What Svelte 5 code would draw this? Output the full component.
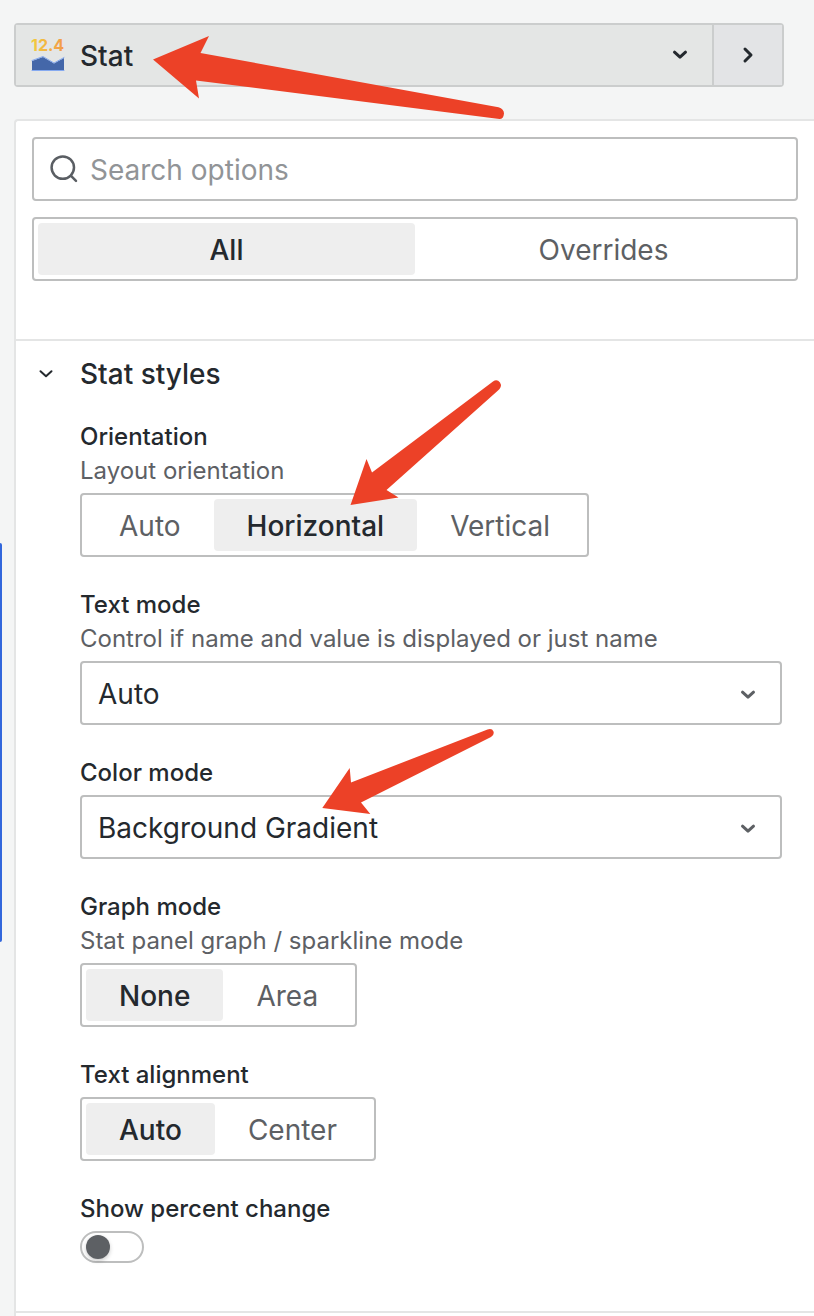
<script>
  let search = $state('');
  let scope = $state('All');
  let orientation = $state('Horizontal');
  let textMode = $state('Auto');
  let colorMode = $state('Background Gradient');
  let graphMode = $state('None');
  let alignment = $state('Auto');
  let percentChange = $state(false);
  let open = $state(true);
</script>

{#snippet chevron()}
  <svg class="chevron" viewBox="0 0 16 10" width="16" height="10" aria-hidden="true">
    <path d="M2.500 2.200 8 7.200l5.500-5" />
  </svg>
{/snippet}

{#snippet segments(name, options, value, pick)}
  <div class="segments" class:full={name === 'scope'} role="radiogroup" aria-label={name}>
    {#each options as option}
      <label class="segment">
        <input type="radio" {name} value={option} checked={value === option} onchange={() => pick(option)} />
        <span>{option}</span>
      </label>
    {/each}
  </div>
{/snippet}

<div class="page">
  <header class="viz">
    <button class="viz-current" type="button">
      <svg class="viz-icon" viewBox="-1 -4 36 42" width="36" height="42" aria-hidden="true">
        <defs>
          <linearGradient id="digits" x1="0" x2="1">
            <stop offset="0" stop-color="#f2cc3c" />
            <stop offset="1" stop-color="#f29a4b" />
          </linearGradient>
        </defs>
        <text x="0" y="13" fill="url(#digits)">12.4</text>
        <path d="M1 23 12 19l11 6.500L33 20v13H1z" fill="#4467a9" />
        <path d="M1 22.500 12 18.500l11 6.500L33 19.500M1 32.500h32" fill="none" stroke="#86aaf0" stroke-width="1" />
      </svg>
      <span>Stat</span>
      {@render chevron()}
    </button>
    <button class="viz-next" type="button" aria-label="Close">
      <svg viewBox="0 0 12 18" width="12" height="18" aria-hidden="true">
        <path d="M3 3l6 6-6 6" />
      </svg>
    </button>
  </header>

  <main class="panel">
    <div class="filters">
      <label class="search">
        <svg viewBox="0 0 28 28" width="28" height="28" aria-hidden="true">
          <circle cx="12.800" cy="12.600" r="11.200" />
          <path d="M20.800 20.600 26 25.800" />
        </svg>
        <input type="text" aria-label="Search options" placeholder="Search options" bind:value={search} />
      </label>
      {@render segments('scope', ['All', 'Overrides'], scope, (v) => (scope = v))}
    </div>

    <section>
      <h2>
        <button type="button" aria-expanded={open} onclick={() => (open = !open)}>
          {@render chevron()}
          <span>Stat styles</span>
        </button>
      </h2>
      {#if open}
        <div class="fields">
          <div class="field">
            <div class="title">Orientation</div>
            <p>Layout orientation</p>
            {@render segments('orientation', ['Auto', 'Horizontal', 'Vertical'], orientation, (v) => (orientation = v))}
          </div>
          <div class="field">
            <label class="title" for="text-mode">Text mode</label>
            <p>Control if name and value is displayed or just name</p>
            <div class="select">
              <select id="text-mode" bind:value={textMode}>
                <option>Auto</option>
              </select>
              {@render chevron()}
            </div>
          </div>
          <div class="field">
            <label class="title" for="color-mode">Color mode</label>
            <div class="select">
              <select id="color-mode" bind:value={colorMode}>
                <option>Background Gradient</option>
              </select>
              {@render chevron()}
            </div>
          </div>
          <div class="field">
            <div class="title">Graph mode</div>
            <p>Stat panel graph / sparkline mode</p>
            {@render segments('graph', ['None', 'Area'], graphMode, (v) => (graphMode = v))}
          </div>
          <div class="field">
            <div class="title">Text alignment</div>
            {@render segments('alignment', ['Auto', 'Center'], alignment, (v) => (alignment = v))}
          </div>
          <div class="field">
            <label class="title" for="percent">Show percent change</label>
            <input id="percent" class="switch" type="checkbox" role="switch" bind:checked={percentChange} />
          </div>
        </div>
      {/if}
    </section>
    <section></section>
  </main>

  <div class="selection"></div>
  <svg class="arrows" viewBox="0 0 520 830" width="520" height="830" aria-hidden="true">
    <path d="M153 59.500 209 36l-8.500 17L498.500 107.300Q504 109 504 113.500 503.500 119 499.500 119L196 80.500l3 18z" />
    <path d="M350.500 505 366.500 459l5.500 13.500L493 381.500Q497 378.500 500 382.500 502.500 386.500 498 390.500L386.500 490l12 7.500z" />
    <path d="M322.300 808 349.700 768l1.300 14.500L487.500 729.500Q492 728 493.500 731.500 494.500 735 491 737L361 802.500l9.300 11.500z" />
  </svg>
</div>

<style>
  :global(body) {
    background: #f4f5f5;
  }
  .page {
    position: relative;
    overflow: hidden;
    box-sizing: border-box;
    min-height: 100vh;
    padding: 23px 0 0 14px;
    display: flex;
    flex-direction: column;
    gap: 32px;
    font: 400 28px/32px Inter, "Liberation Sans", sans-serif;
    color: #24292e;
  }
  .page *,
  .page *::before {
    box-sizing: border-box;
  }
  button,
  input,
  select {
    font: inherit;
    color: inherit;
    margin: 0;
  }
  svg {
    flex: none;
    fill: none;
    stroke: currentColor;
    stroke-width: 3;
    stroke-linecap: round;
    stroke-linejoin: round;
  }
  .viz {
    display: flex;
    height: 64px;
    margin-right: 30px;
    border: 2px solid #cbcdcd;
    border-radius: 4px;
  }
  .viz button {
    border: 0;
    background: #e4e6e5;
    font-weight: 500;
  }
  .viz .viz-current {
    flex: 1;
    display: flex;
    align-items: center;
    gap: 14px;
    padding: 0 24px 0 14px;
    text-align: left;
  }
  .viz-current span {
    flex: 1;
    padding-top: 2px;
  }
  .viz-icon {
    stroke: none;
  }
  .viz-icon text {
    font-size: 16px;
    font-weight: 700;
  }
  .viz .viz-next {
    width: 70px;
    display: grid;
    place-items: center;
    padding: 0;
    border-left: 2px solid #cbcdcd;
    background: #e3e4e6;
  }
  .panel {
    flex: 1;
    border: 2px solid #e4e5e5;
    border-width: 2px 0 0 2px;
    border-radius: 4px 0 0 0;
    background: #fff;
  }
  .filters {
    display: flex;
    flex-direction: column;
    gap: 16px;
    padding: 16px 16px 58px;
  }
  .search {
    display: flex;
    align-items: center;
    gap: 12px;
    height: 64px;
    padding: 0 16px;
    border: 2px solid #bdbebe;
    border-radius: 4px;
  }
  .search svg {
    stroke: #5a5e63;
    stroke-width: 2.5;
  }
  .search input {
    flex: 1;
    min-width: 0;
    border: 0;
    padding: 2px 0 0;
    outline: 0;
    background: none;
  }
  .search input::placeholder {
    color: #919497;
    opacity: 1;
  }
  .segments {
    display: inline-flex;
    height: 64px;
    padding: 4px;
    border: 2px solid #bdbebe;
    border-radius: 4px;
  }
  .segments.full {
    display: flex;
  }
  .full .segment {
    flex: 1;
  }
  .segment {
    position: relative;
    display: flex;
    color: #5d6064;
  }
  .segment input {
    position: absolute;
    inset: 0;
    opacity: 0;
  }
  .segment span {
    flex: 1;
    padding: 2px 33px 0;
    border-radius: 4px;
    line-height: 50px;
    text-align: center;
  }
  .segment input:checked + span {
    background: #eee;
    color: #24292e;
    font-weight: 500;
  }
  section {
    border-top: 2px solid #e4e5e5;
  }
  h2 {
    margin: 0;
    font: inherit;
    font-weight: 500;
  }
  h2 button {
    display: flex;
    align-items: center;
    gap: 26px;
    width: 100%;
    height: 66px;
    padding: 0 22px;
    border: 0;
    background: none;
  }
  h2 .chevron {
    stroke-width: 2;
  }
  .fields {
    display: flex;
    flex-direction: column;
    gap: 32px;
    padding: 14px 32px 48px 64px;
  }
  .field {
    display: flex;
    flex-direction: column;
    align-items: flex-start;
  }
  .title {
    margin-bottom: 6px;
    font-size: 24px;
    font-weight: 500;
  }
  .field p {
    margin: -4px 0 6px;
    font-size: 24px;
    color: #5d6064;
  }
  .select {
    position: relative;
    width: 100%;
  }
  .select select {
    display: block;
    width: 100%;
    height: 64px;
    padding: 2px 64px 0 16px;
    border: 2px solid #bdbebe;
    border-radius: 4px;
    appearance: none;
    background: #fff;
  }
  .select .chevron {
    position: absolute;
    right: 26px;
    top: 29px;
    color: #5d6064;
    pointer-events: none;
  }
  .switch {
    appearance: none;
    width: 64px;
    height: 32px;
    padding: 2px 4px;
    border: 2px solid #bdbebe;
    border-radius: 16px;
  }
  .switch::before {
    content: "";
    display: block;
    width: 24px;
    height: 24px;
    border-radius: 50%;
    background: #5d6064;
    box-shadow: 0 2px 4px #0003;
  }
  .switch:checked::before {
    margin-left: auto;
  }
  .selection {
    position: absolute;
    left: 0;
    top: 543px;
    width: 2px;
    height: 399px;
    border-radius: 0 2px 2px 0;
    background: #3267dc;
  }
  .arrows {
    position: absolute;
    left: 0;
    top: 0;
    fill: #ec4127;
    stroke: none;
    pointer-events: none;
  }
</style>
